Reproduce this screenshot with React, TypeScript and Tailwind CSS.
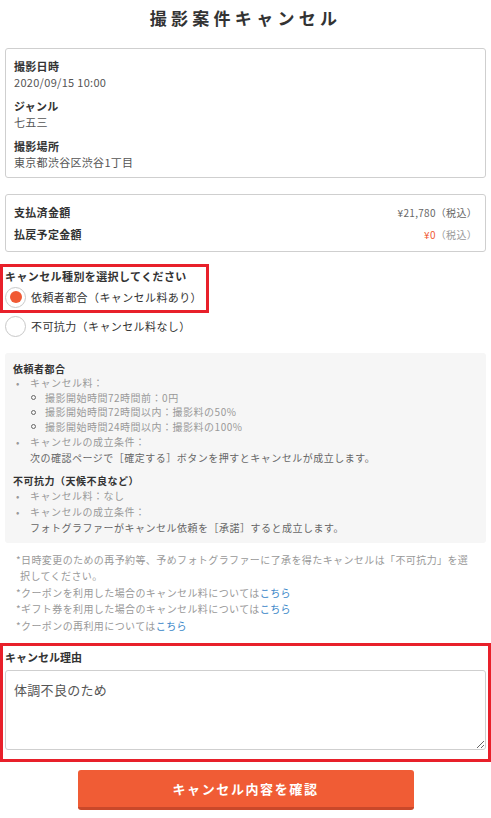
import { useState } from "react";

const jp = { fontFamily: '"Noto Sans CJK JP", "Noto Sans", sans-serif' };

function InfoItem({ label, value }: { label: string; value: string }) {
  return (
    <div className="flex flex-col">
      <div className="text-[11px] leading-[16px] font-bold text-[#333] tracking-[0.3px]">{label}</div>
      <div className="text-[11px] leading-[17px] text-[#555] tracking-[0.3px]">{value}</div>
    </div>
  );
}

function Radio({ checked, label, onClick }: { checked: boolean; label: string; onClick: () => void }) {
  return (
    <button type="button" onClick={onClick} className="flex items-center gap-[5px] h-[24px]">
      <span className="w-[21px] h-[21px] rounded-full border border-[#c8c8c8] bg-white flex items-center justify-center">
        {checked && <span className="w-[12px] h-[12px] rounded-full bg-[#f05a35]" />}
      </span>
      <span className="text-[11px] text-[#333] tracking-[0.4px]">{label}</span>
    </button>
  );
}

export default function App() {
  const [kind, setKind] = useState<"client" | "force">("client");
  const [reason, setReason] = useState("体調不良のため");

  return (
    <div className="w-[491px] bg-white pb-[7px]" style={jp}>
      {/* タイトル */}
      <h1 className="h-[42px] pt-[6px] text-center text-[17px] leading-[24px] font-bold text-[#333] tracking-[4.3px]">
        撮影案件キャンセル
      </h1>

      {/* 撮影情報 */}
      <div className="mx-[5px] mt-[6px] border border-[#cfcfcf] rounded-[3px] px-[8px] pt-[9px] pb-[6px] flex flex-col gap-[7px]">
        <InfoItem label="撮影日時" value="2020/09/15 10:00" />
        <InfoItem label="ジャンル" value="七五三" />
        <InfoItem label="撮影場所" value="東京都渋谷区渋谷1丁目" />
      </div>

      {/* 金額 */}
      <div className="mx-[5px] mt-[16px] border border-[#cfcfcf] rounded-[3px] px-[8px] pt-[9px] pb-[9px] flex flex-col gap-[6px]">
        <div className="flex justify-between items-center h-[16px]">
          <span className="text-[11px] font-bold text-[#333] tracking-[0.3px]">支払済金額</span>
          <span className="text-[10px] text-[#666] tracking-[0.3px]">¥21,780（税込）</span>
        </div>
        <div className="flex justify-between items-center h-[16px]">
          <span className="text-[11px] font-bold text-[#333] tracking-[0.3px]">払戻予定金額</span>
          <span className="text-[10px] text-[#999] tracking-[0.3px]">
            <span className="text-[#f05a35]">¥0</span>（税込）
          </span>
        </div>
      </div>

      {/* キャンセル種別 */}
      <div className="mt-[12px]">
        <div className="w-[209px] border-[3px] border-[#e8202a] pl-[2px] pb-[1px]">
          <div className="text-[11px] leading-[17px] font-bold text-[#333] tracking-[0.4px] mt-[1px]">
            キャンセル種別を選択してください
          </div>
          <Radio checked={kind === "client"} label="依頼者都合（キャンセル料あり）" onClick={() => setKind("client")} />
        </div>
        <div className="pl-[5px] mt-[1px]">
          <Radio checked={kind === "force"} label="不可抗力（キャンセル料なし）" onClick={() => setKind("force")} />
        </div>
      </div>

      {/* 説明 */}
      <div className="mx-[5px] mt-[15px] bg-[#f6f6f6] rounded-[3px] px-[8px] pt-[8px] pb-[7px] text-[10px] tracking-[0.5px]">
        <div className="font-bold text-[#333] leading-[15px]">依頼者都合</div>
        <ul className="text-[#999] leading-[14.5px]">
          <li className="flex">
            <span className="w-[17px] pl-[3px]">•</span>キャンセル料：
          </li>
          <li className="pl-[17px]">
            <ul>
              {["撮影開始時間72時間前：0円", "撮影開始時間72時間以内：撮影料の50%", "撮影開始時間24時間以内：撮影料の100%"].map((t) => (
                <li key={t} className="flex items-center">
                  <span className="w-[15px] flex">
                    <span className="ml-[1px] w-[5px] h-[5px] rounded-full border border-[#666]" />
                  </span>
                  {t}
                </li>
              ))}
            </ul>
          </li>
          <li className="flex mt-[1px]">
            <span className="w-[17px] pl-[3px]">•</span>キャンセルの成立条件：
          </li>
          <li className="pl-[17px] text-[#666] leading-[16px]">次の確認ページで［確定する］ボタンを押すとキャンセルが成立します。</li>
        </ul>
        <div className="font-bold text-[#333] leading-[15px] mt-[7px]">不可抗力（天候不良など）</div>
        <ul className="text-[#999] leading-[16px]">
          <li className="flex">
            <span className="w-[17px] pl-[3px]">•</span>キャンセル料：なし
          </li>
          <li className="flex">
            <span className="w-[17px] pl-[3px]">•</span>キャンセルの成立条件：
          </li>
          <li className="pl-[17px] text-[#666]">フォトグラファーがキャンセル依頼を［承諾］すると成立します。</li>
        </ul>
      </div>

      {/* 注意事項 */}
      <div className="px-[16px] mt-[9px] text-[10px] text-[#999] tracking-[0.4px] leading-[16.5px]">
        <p className="pl-[4px] -indent-[4px]">*日時変更のための再予約等、予めフォトグラファーに了承を得たキャンセルは「不可抗力」を選択してください。</p>
        <p>*クーポンを利用した場合のキャンセル料については<a className="text-[#3a86c8]">こちら</a></p>
        <p>*ギフト券を利用した場合のキャンセル料については<a className="text-[#3a86c8]">こちら</a></p>
        <p>*クーポンの再利用については<a className="text-[#3a86c8]">こちら</a></p>
      </div>

      {/* キャンセル理由 */}
      <div className="mt-[9px] border-[3px] border-[#e8202a] px-[2px] pb-[9px]">
        <div className="text-[11px] leading-[22px] font-bold text-[#333]">キャンセル理由</div>
        <textarea
          value={reason}
          onChange={(e) => setReason(e.target.value)}
          className="block mt-[2px] w-full h-[80px] border border-[#cfcfcf] rounded-[3px] px-[8px] pt-[9px] text-[13px] text-[#555] tracking-[0.3px] outline-none"
          style={jp}
        />
      </div>

      {/* ボタン */}
      <div className="flex justify-center mt-[8px]">
        <button className="w-[336px] h-[40px] rounded-[3px] bg-[#f05c35] border-b-[3px] border-[#c9482a] text-white font-bold text-[13px] tracking-[1.6px]">
          キャンセル内容を確認
        </button>
      </div>
    </div>
  );
}
